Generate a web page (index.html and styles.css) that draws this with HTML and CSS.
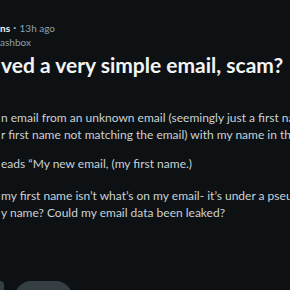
FILE: index.html
```html
<!DOCTYPE html>
<html>
<head>
<meta charset="utf-8">
<link rel="stylesheet" href="styles.css">
</head>
<body>
<div class="post">
  <div class="meta"><span class="sub">ns</span><span class="dot">•</span><span class="time">13h ago</span></div>
  <div class="user">ashbox</div>
  <h1 class="title">ved a very simple email, scam?</h1>
  <div class="text">
    <p class="line-1">n email from an unknown email (seemingly just a first name</p>
    <p class="line-2">r first name not matching the email) with my name in the</p>
    <p class="para">eads “My new email, (my first name.)</p>
    <p class="para line-4">my first name isn’t what’s on my email- it’s under a pseudonym</p>
    <p class="line-5">y name? Could my email data been leaked?</p>
  </div>
  <div class="actions">
    <span class="btn btn-cut"></span>
    <span class="btn btn-vote"></span>
  </div>
</div>
</body>
</html>
```
FILE: styles.css
```css
html, body {
  margin: 0;
  padding: 0;
  background: #0e1113;
  width: 290px;
  height: 290px;
  overflow: hidden;
}
.post {
  font-family: Lato, "Noto Sans", sans-serif;
  color: #d7dadc;
  padding-top: 21px;
  white-space: nowrap;
  overflow: hidden;
  height: 269px;
}
.meta {
  font-size: 10px;
  line-height: 14px;
  color: #8ba2ad;
}
.sub {
  color: #f2f4f5;
  font-weight: 700;
}
.dot {
  margin: 0 3px;
  font-size: 6px;
  vertical-align: 2px;
}
.user {
  font-size: 10px;
  line-height: 14px;
  color: #8ba2ad;
}
.title {
  margin: 3px 0 0 1px;
  font-size: 21px;
  line-height: 26px;
  font-weight: 700;
  color: #f2f4f5;
}
.text {
  margin-top: 31px;
  font-size: 12px;
  line-height: 17px;
  color: #c9d1d5;
  padding-left: 1px;
}
.text p {
  margin: 0;
}
.text .para {
  margin-top: 12px;
}
.text .line-4 {
  margin-top: 15px;
}
.actions {
  display: flex;
  gap: 11px;
  margin-top: 60px;
}
.btn {
  display: block;
  height: 32px;
  background: #353e43;
  border-radius: 16px;
}
.btn-cut {
  width: 4px;
  border-radius: 0 16px 16px 0;
}
.btn-vote {
  width: 57px;
}
```
